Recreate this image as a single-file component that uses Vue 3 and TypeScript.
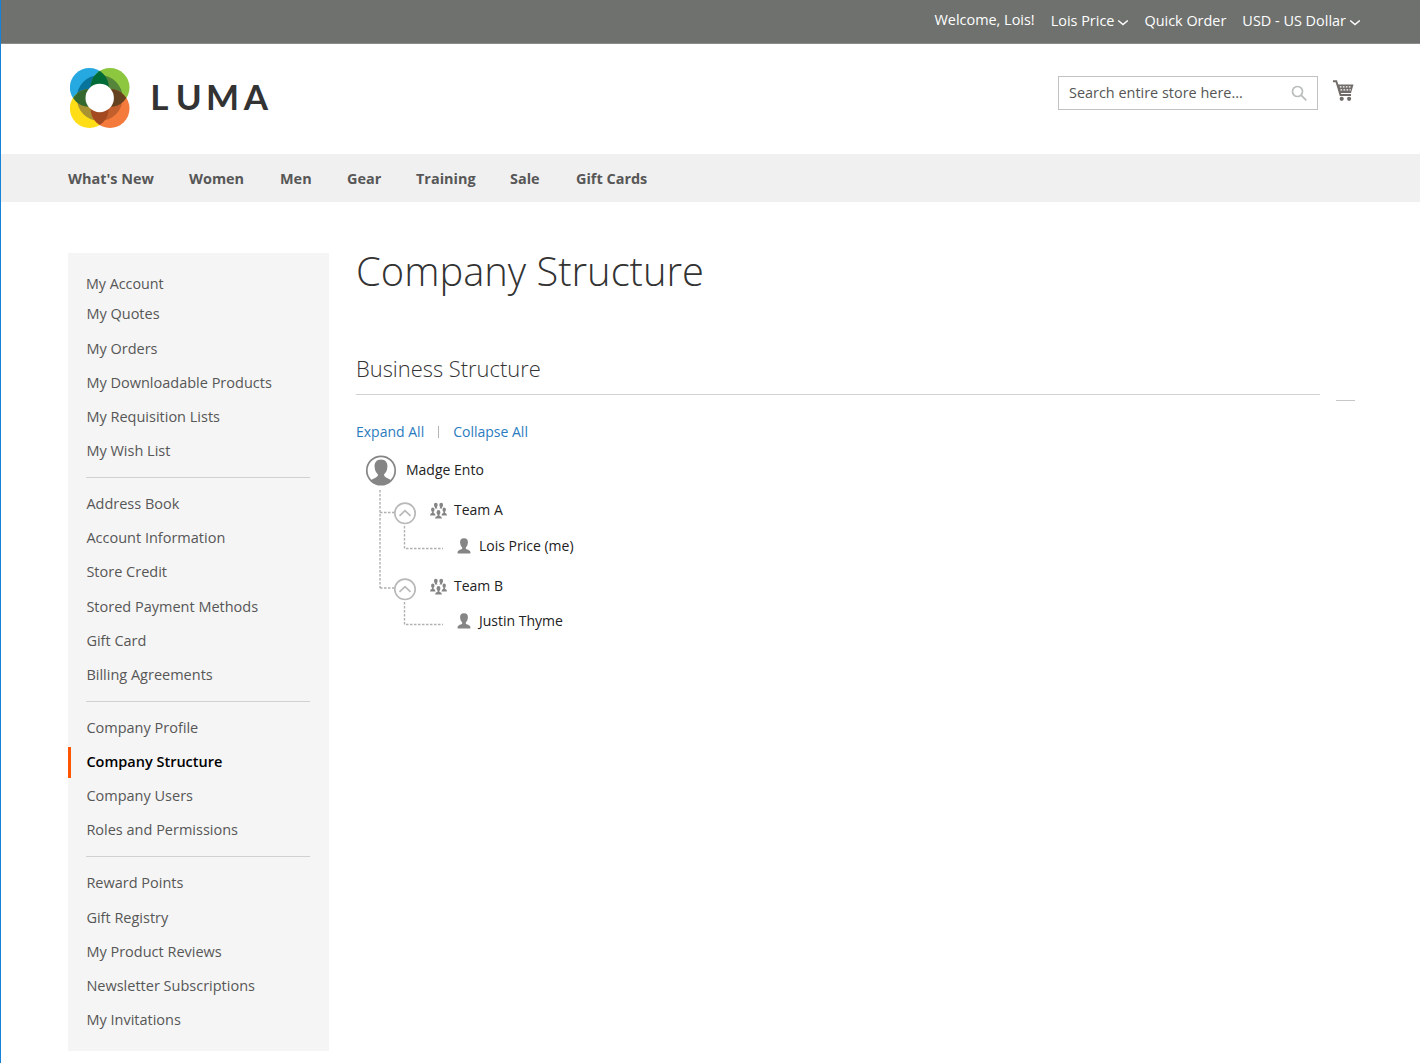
<script setup lang="ts">
interface NavItem {
  label: string
  width: number
  gap: number
}

const navItems: NavItem[] = [
  { label: "What's New", width: 87, gap: 34 },
  { label: 'Women', width: 56, gap: 35 },
  { label: 'Men', width: 32, gap: 35 },
  { label: 'Gear', width: 35, gap: 34 },
  { label: 'Training', width: 60, gap: 34 },
  { label: 'Sale', width: 31, gap: 35 },
  { label: 'Gift Cards', width: 72, gap: 0 },
]

const accountGroups: string[][] = [
  ['My Quotes', 'My Orders', 'My Downloadable Products', 'My Requisition Lists', 'My Wish List'],
  ['Address Book', 'Account Information', 'Store Credit', 'Stored Payment Methods', 'Gift Card', 'Billing Agreements'],
  ['Company Profile', 'Company Structure', 'Company Users', 'Roles and Permissions'],
  ['Reward Points', 'Gift Registry', 'My Product Reviews', 'Newsletter Subscriptions', 'My Invitations'],
]

const current = 'Company Structure'

const teams = [
  { name: 'Team A', member: 'Lois Price (me)' },
  { name: 'Team B', member: 'Justin Thyme' },
]
</script>

<template>
  <div class="page">
    <header>
      <div class="panel">
        <span class="welcome">Welcome, Lois!</span>
        <span class="menu user">Lois Price
          <svg width="12" height="8" viewBox="0 0 12 8"><path d="M1.200 1.500 6 5.500l4.800-4" /></svg>
        </span>
        <span class="quick">Quick Order</span>
        <span class="menu">USD - US Dollar
          <svg width="12" height="8" viewBox="0 0 12 8"><path d="M1.200 1.500 6 5.500l4.800-4" /></svg>
        </span>
      </div>
      <div class="brand">
        <svg class="logo" width="202" height="62" viewBox="0 0 202 62">
          <defs>
            <clipPath id="blue"><circle cx="19.4" cy="19.5" r="19.4" /></clipPath>
            <clipPath id="green"><circle cx="40" cy="19.5" r="19.4" /></clipPath>
            <clipPath id="yellow"><circle cx="19.4" cy="40.5" r="19.4" /></clipPath>
            <clipPath id="orange"><circle cx="40" cy="40.5" r="19.4" /></clipPath>
          </defs>
          <circle cx="19.4" cy="19.5" r="19.5" fill="#26a9e0" />
          <circle cx="40" cy="19.5" r="19.5" fill="#8dc63f" />
          <circle cx="19.4" cy="40.5" r="19.5" fill="#ffde17" />
          <circle cx="40" cy="40.5" r="19.5" fill="#f47b3c" />
          <circle cx="29.7" cy="30" r="23" fill="#08739b" clip-path="url(#blue)" />
          <circle cx="29.7" cy="30" r="23" fill="#55853b" clip-path="url(#green)" />
          <circle cx="29.7" cy="30" r="23" fill="#a99232" clip-path="url(#yellow)" />
          <circle cx="29.7" cy="30" r="23" fill="#c25f2d" clip-path="url(#orange)" />
          <g clip-path="url(#blue)">
            <circle cx="40" cy="19.5" r="19.4" fill="#006b36" />
            <circle cx="19.4" cy="40.5" r="19.4" fill="#35682f" />
          </g>
          <g clip-path="url(#orange)">
            <circle cx="40" cy="19.5" r="19.4" fill="#65421f" />
            <circle cx="19.4" cy="40.5" r="19.4" fill="#a34a20" />
          </g>
          <circle cx="29.7" cy="30" r="14.2" fill="#fff" />
          <text x="80.3 105.8 136 173.800" y="42">LUMA</text>
        </svg>
        <div class="search">
          <span>Search entire store here...</span>
          <svg width="17" height="17" viewBox="0 0 17 17"><circle cx="6.5" cy="6.5" r="5" /><path d="m10.3 10.3 5 5" /></svg>
        </div>
        <svg class="cart" width="22" height="22" viewBox="0 0 22 22">
          <path d="M0 1.200H3.300L7.500 15H18" fill="none" stroke="#706c69" stroke-width="1.900" />
          <path d="M4 4.500H20.500L18 13H6.500Z" fill="#706c69" />
          <path d="M6.800 6.800H18.500M7.500 9.800h10.300" stroke="#fff" stroke-width="1.300" fill="none" stroke-dasharray="1.700 1.300" />
          <circle cx="8.700" cy="18.800" r="2.100" fill="#706c69" /><circle cx="16.100" cy="18.800" r="2.100" fill="#706c69" />
        </svg>
      </div>
      <nav>
        <a v-for="item in navItems" :key="item.label" :style="{ width: item.width + 'px', marginRight: item.gap + 'px' }">{{ item.label }}</a>
      </nav>
    </header>
    <div class="columns">
      <aside>
        <div class="first">My Account</div>
        <ul v-for="(group, i) in accountGroups" :key="i">
          <li v-for="label in group" :key="label" :class="{ current: label === current }">{{ label }}</li>
        </ul>
      </aside>
      <main>
        <h1><span>Company Structure</span></h1>
        <h2><span>Business Structure</span></h2>
        <div class="actions"><a>Expand All</a><i></i><a>Collapse All</a></div>
        <div class="tree">
          <svg class="lines" width="80" height="140" viewBox="0 0 80 140">
            <path d="M14 0V98M14 22.5H28M14 98H28M38.500 36V58.500H77M38.500 112V134.500H77" />
          </svg>
          <div class="root">
            <svg width="32" height="32" viewBox="0 0 32 32">
              <circle cx="16" cy="16.500" r="14.200" fill="#fff" stroke="#858585" stroke-width="1.700" />
              <path d="M16 5.500C11.300 5.500 9.300 8.800 9.600 13.100C9.800 16.700 11.200 19 13 20.500C13 23 10.500 23.500 5.800 26.300C11.500 32.200 20.500 32.200 26.200 26.300C21.500 23.500 19 23 19 20.500C20.800 19 22.200 16.700 22.400 13.100C22.700 8.800 20.700 5.500 16 5.500Z" fill="#858585" />
            </svg>
            <span>Madge Ento</span>
          </div>
          <div v-for="team in teams" :key="team.name" class="branch">
            <div class="team">
              <svg class="toggle" width="24" height="24" viewBox="0 0 24 24"><circle cx="12" cy="12.300" r="10.200" /><path d="m6.500 14.800 5.500-5.200 5.500 5.200" /></svg>
              <svg class="people" width="17" height="17" viewBox="0 0 17 17" fill="#858585">
                <ellipse cx="5.800" cy="3" rx="1.900" ry="2.300" /><ellipse cx="11.200" cy="3" rx="1.900" ry="2.300" />
                <ellipse cx="2.800" cy="7.800" rx="1.700" ry="2.200" /><ellipse cx="14.200" cy="7.800" rx="1.700" ry="2.200" />
                <ellipse cx="8.500" cy="10.500" rx="1.900" ry="2.400" />
                <path d="M4.800 5H6.800L7.500 6.500H5ZM10.200 5H12.200L12 6.500H9.500ZM0 13.500q0-2.200 2-2.700V9.500h1.600v1.300q1.800.5 1.900 2.700ZM17 13.500q0-2.200-2-2.700V9.500h-1.600v1.300q-1.800.5-1.900 2.700ZM5 16.500q.2-2.100 2.600-2.700V12h1.800v1.800q2.400.6 2.600 2.700Z" />
              </svg>
              <span>{{ team.name }}</span>
            </div>
            <div class="member">
              <svg width="14" height="16" viewBox="0 0 14 16"><path d="M7 .3C4 .3 2.900 2.200 3.100 4.600C3.200 6.800 4.100 8.500 5.200 9.400V10.500C4.700 11.700 1 11.700.6 14V15.500H13.400V14C13 11.700 9.300 11.700 8.800 10.500V9.400C9.900 8.500 10.800 6.800 10.900 4.600C11.100 2.200 10 .3 7 .3Z" fill="#858585" /></svg>
              <span>{{ team.member }}</span>
            </div>
          </div>
        </div>
        <div class="footnote"></div>
      </main>
    </div>
  </div>
</template>

<style>
body { margin: 0; background: #fff; }
</style>

<style scoped>
* { box-sizing: border-box; }
.page { height: 1063px; overflow: hidden; border-left: 1px solid #1683d8; font: 14.5px/20px 'Open Sans', sans-serif; color: #333; }
span, a, li, .first { white-space: nowrap; }
.panel { height: 44px; background: #6e716e; border-bottom: 1px solid #8b8d8b; color: #fff; display: flex; justify-content: flex-end; padding: 11px 59px 0 0; font-size: 14.45px; font-weight: 500; }
.welcome { margin: -1px 16px 0 0; }
.menu { display: flex; align-items: center; height: 20px; gap: 3px; }
.menu svg { margin-top: 3px; fill: none; stroke: #fff; stroke-width: 1.5; }
.user { margin-right: 15px; }
.quick { margin-right: 16px; }
.brand { height: 110px; display: flex; padding: 0 65px 0 69px; }
.logo { margin-top: 24px; margin-right: auto; }
.logo text { font: 700 35px Lato, sans-serif; fill: #333; }
.search { width: 260px; height: 34px; margin: 32px 15px 0 0; padding: 0 9px 0 10px; border: 1px solid #c2c2c2; display: flex; align-items: center; justify-content: space-between; color: #555; font-size: 14.45px; }
.cart { margin-top: 36px; }
.search svg { fill: none; stroke: #b9bcbc; stroke-width: 1.7; }
nav { height: 48px; background: #f0f0f0; padding: 15px 0 0 67px; display: flex; font-weight: 700; font-size: 14.45px; color: #575757; }
.columns { display: flex; align-items: flex-start; padding: 51px 0 0 67px; }
aside { width: 261px; height: 798px; background: #f5f5f5; padding-top: 21px; color: #575757; }
.first { padding-left: 18px; height: 23.4px; font-weight: 500; font-size: 14.3px; }
ul { list-style: none; margin: 0 19px 0 18px; padding: 0 0 8.900px; border-bottom: 1px solid #d1d1d1; }
ul + ul { padding-top: 9px; }
ul:last-child { border: 0; }
li { height: 34.160px; line-height: 34.160px; padding-left: .4px; }
li.current { margin-left: -18px; padding-left: 18.4px; color: #000; font-weight: 600; background: linear-gradient(#ff5501, #ff5501) 0 2px / 3px 31px no-repeat; }
main { width: 1000px; padding-left: 27px; }
h1 { margin: -10px 0 0; font-weight: 300; font-size: 39.9px; line-height: 56px; color: #333; }
h2 { margin: 45px 0 0; width: 964px; height: 51px; border-bottom: 1px solid #d1d1d1; font-weight: 300; font-size: 21.9px; line-height: 49px; color: #333; }
.actions { display: flex; align-items: center; margin-top: 27px; color: #2a7cc0; font-size: 14px; }
.actions i { width: 1px; height: 12px; background: #b5b5b5; margin: 0 14px; }
.tree { position: relative; padding-left: 9px; font-size: 14px; color: #222; }
.lines { position: absolute; left: 10px; top: 36px; fill: none; stroke: #b0b0b0; stroke-width: 1.400; stroke-dasharray: 2.500 1.500; }
.root { display: flex; align-items: center; height: 32px; margin-top: 12px; gap: 9px; }
.branch { padding-left: 28px; height: 76px; }
.team { display: flex; align-items: center; height: 48px; }
.toggle { position: relative; margin-top: 6px; fill: #fff; stroke: #b9b9b9; stroke-width: 1.700; }
.toggle path { fill: none; }
.people { margin: 1px 7px 0 13px; }
.member { display: flex; align-items: center; padding-left: 64px; height: 23px; gap: 8px; }
.branch:last-child .member { height: 22px; }
.footnote { width: 19px; height: 1px; background: #c7c7c7; margin: -238px 0 0 980px; }
</style>
